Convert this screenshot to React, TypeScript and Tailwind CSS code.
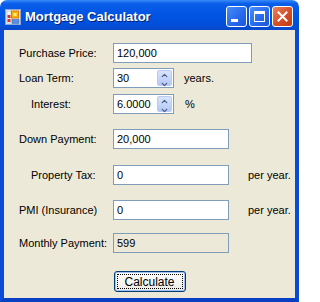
import { ChevronUp, ChevronDown } from "lucide-react";

const ui = "font-['Liberation_Sans',Arial,sans-serif] text-[11px] text-black";

const TextBox = ({ value, width, readOnly }: { value: string; width: string; readOnly?: boolean }) => (
  <div
    className={`${width} h-[20px] border border-[#7f9db9] flex items-center pl-[3px] ${
      readOnly ? "bg-[#ece9d8]" : "bg-white"
    }`}
  >
    {value}
  </div>
);

const Spinner = ({ value }: { value: string }) => (
  <div className="w-[61px] h-[20px] border border-[#7f9db9] bg-white flex items-center justify-between pl-[3px] pr-[1px]">
    <span>{value}</span>
    {/* up/down spin buttons */}
    <div className="flex flex-col w-[15px] h-[16px] rounded-[2px] bg-gradient-to-b from-[#d8e4fc] to-[#b4c8f6] border border-[#b9cbf3]">
      <div className="flex-1 flex items-center justify-center">
        <ChevronUp className="w-[9px] h-[9px] text-[#4d6185]" strokeWidth={3.5} />
      </div>
      <div className="flex-1 flex items-center justify-center">
        <ChevronDown className="w-[9px] h-[9px] text-[#4d6185]" strokeWidth={3.5} />
      </div>
    </div>
  </div>
);

const Row = ({
  label,
  indent,
  className,
  children,
}: {
  label: string;
  indent?: boolean;
  className: string;
  children: React.ReactNode;
}) => (
  <div className={`flex items-center h-[20px] ${className}`}>
    <div className={`w-[94px] shrink-0 ${indent ? "pl-[12px]" : ""}`}>{label}</div>
    {children}
  </div>
);

const AppIcon = () => (
  <svg width="16" height="16" viewBox="0 0 16 16">
    <rect x="0.5" y="0.5" width="15" height="15" fill="#dfe8f7" stroke="#8da6d6" />
    <rect x="2" y="2" width="4" height="12" fill="#f3f3f3" stroke="#b5b5b5" strokeWidth="0.5" />
    <rect x="2.5" y="6" width="3" height="3" fill="#d8352a" />
    <rect x="2.5" y="10" width="3" height="3" fill="#d8352a" />
    <rect x="6.5" y="2" width="7" height="7" fill="#f5b800" stroke="#e07a00" />
    <rect x="8.5" y="4" width="3" height="3" fill="#ffe680" />
    <rect x="7" y="10.5" width="7" height="4" fill="#5a8fe0" stroke="#2e5fb8" strokeWidth="0.5" />
  </svg>
);

const CaptionButton = ({ kind }: { kind: "min" | "max" | "close" }) => (
  <div
    className={`w-[21px] h-[21px] rounded-[3px] border border-white flex items-center justify-center ${
      kind === "close"
        ? "bg-gradient-to-br from-[#e8835e] via-[#d8502a] to-[#c23a12]"
        : "bg-gradient-to-br from-[#4a8bf5] via-[#2a6ef0] to-[#1d55d8]"
    }`}
  >
    {kind === "min" && <div className="w-[7px] h-[3px] bg-white mt-[8px] -ml-[4px]" />}
    {kind === "max" && <div className="w-[11px] h-[11px] border border-white border-t-[3px]" />}
    {kind === "close" && (
      <svg width="11" height="11" viewBox="0 0 11 11">
        <path d="M1.5 1.5 L9.5 9.5 M9.5 1.5 L1.5 9.5" stroke="white" strokeWidth="2" strokeLinecap="square" />
      </svg>
    )}
  </div>
);

export default function App() {
  return (
    <div className={`w-[299px] h-[302px] flex flex-col ${ui}`}>
      {/* title bar */}
      <div className="h-[30px] shrink-0 rounded-t-[7px] bg-[linear-gradient(to_bottom,#3a8cf8_0%,#0a5eea_12%,#0255e3_45%,#0050dc_80%,#0a48c9_100%)] flex items-center pt-[3px] pl-[5px] pr-[6px]">
        <AppIcon />
        <span className="ml-[4px] text-white font-bold text-[13px] [text-shadow:1px_1px_0_#0a1f6e]">
          Mortgage Calculator
        </span>
        <div className="ml-auto flex gap-[2px]">
          <CaptionButton kind="min" />
          <CaptionButton kind="max" />
          <CaptionButton kind="close" />
        </div>
      </div>

      {/* client area */}
      <div className="flex-1 flex flex-col bg-[#ece9d8] border-x-4 border-b-4 border-x-[#0a4ad9] border-b-[#0a3fc4] pl-[15px]">
        <Row label="Purchase Price:" className="mt-[13px]">
          <TextBox value="120,000" width="w-[139px]" />
        </Row>
        <Row label="Loan Term:" className="mt-[5px]">
          <Spinner value="30" />
          <span className="ml-[10px]">years.</span>
        </Row>
        <Row label="Interest:" indent className="mt-[6px]">
          <Spinner value="6.0000" />
          <span className="ml-[11px]">%</span>
        </Row>
        <Row label="Down Payment:" className="mt-[15px]">
          <TextBox value="20,000" width="w-[116px]" />
        </Row>
        <Row label="Property Tax:" indent className="mt-[16px]">
          <TextBox value="0" width="w-[116px]" />
          <span className="ml-[19px]">per year.</span>
        </Row>
        <Row label="PMI (Insurance)" className="mt-[15px]">
          <TextBox value="0" width="w-[116px]" />
          <span className="ml-[19px]">per year.</span>
        </Row>
        <Row label="Monthly Payment:" className="mt-[13px]">
          <TextBox value="599" width="w-[116px]" readOnly />
        </Row>
        <div className="mt-[18px] flex justify-center pr-[15px]">
          <button className="w-[72px] h-[21px] rounded-[3px] border border-[#003c74] bg-gradient-to-b from-white to-[#ecebe6] shadow-[inset_0_0_0_1px_#9fc2f3] p-[2px]">
            <div className="w-full h-full border border-dotted border-black flex items-center justify-center text-[12px]">
              Calculate
            </div>
          </button>
        </div>
      </div>
    </div>
  );
}
